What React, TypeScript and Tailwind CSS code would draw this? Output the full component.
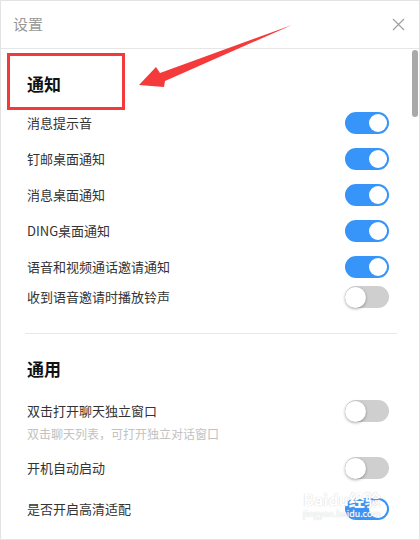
import React from "react";

type Item = { label: string; on: boolean; hint?: string };

const notify: Item[] = [
  { label: "消息提示音", on: true },
  { label: "钉邮桌面通知", on: true },
  { label: "消息桌面通知", on: true },
  { label: "DING桌面通知", on: true },
  { label: "语音和视频通话邀请通知", on: true },
  { label: "收到语音邀请时播放铃声", on: false },
];

const Toggle = ({ on }: { on: boolean }) =>
  on ? (
    <div className="w-[44px] h-[22px] rounded-full bg-[#3794f8] flex items-center justify-end pr-[2px]">
      <div className="w-[18px] h-[18px] rounded-full bg-white" />
    </div>
  ) : (
    <div className="w-[44px] h-[22px] rounded-full bg-[#cfcfcf] flex items-center">
      <div className="w-[21px] h-[21px] rounded-full bg-white shadow-[0_1px_3px_rgba(0,0,0,0.35)]" />
    </div>
  );

const Row = ({ item, className }: { item: Item; className?: string }) => (
  <div className={"h-[30px] flex items-center justify-between " + (className ?? "")}>
    <span className="text-[13px] text-[#333]">{item.label}</span>
    <Toggle on={item.on} />
  </div>
);

export default function App() {
  return (
    <div
      className="relative w-[420px] h-[540px] bg-white border border-[#e3e3e3] overflow-hidden"
      style={{ fontFamily: '"Noto Sans CJK SC", "Noto Sans", sans-serif' }}
    >
      {/* HEADER */}
      <div className="h-[48px] border-b border-[#e6e6e6] flex items-center justify-between pl-[12px] pr-[14px]">
        <span className="text-[15px] text-[#999]">设置</span>
        <svg width="13" height="13" viewBox="0 0 13 13">
          <path d="M1 1L12 12M12 1L1 12" stroke="#a0a0a0" strokeWidth="1.2" />
        </svg>
      </div>

      {/* BODY */}
      <div className="pl-[26px] pr-[30px] flex flex-col">
        <div className="pt-[23px] h-[47px] text-[17px] leading-[24px] font-bold text-[#111]">通知</div>
        <Row item={notify[0]} className="mt-[12px]" />
        <Row item={notify[1]} className="mt-[6px]" />
        <Row item={notify[2]} className="mt-[6px]" />
        <Row item={notify[3]} className="mt-[6px]" />
        <Row item={notify[4]} className="mt-[6px]" />
        <Row item={notify[5]} />

        <div className="mt-[21px] -ml-[2px] w-[372px] h-px bg-[#e8e8e8]" />

        <div className="mt-[23px] text-[17px] leading-[24px] font-bold text-[#111]">通用</div>
        <Row item={{ label: "双击打开聊天独立窗口", on: false }} className="mt-[15px]" />
        <div className="text-[12px] leading-[16px] text-[#c2c2c2]">双击聊天列表，可打开独立对话窗口</div>
        <Row item={{ label: "开机自动启动", on: false }} className="mt-[11px]" />
        <Row item={{ label: "是否开启高清适配", on: true }} className="mt-[11px]" />
      </div>

      {/* SCROLLBAR */}
      <div className="absolute right-[1px] top-[49px] w-[6px] h-[67px] rounded-full bg-[#a9a9a9]" />

      {/* ANNOTATION */}
      <div className="absolute left-[6px] top-[52px] w-[118px] h-[57px] border-[3px] border-[#f23a3a]" />
      <svg className="absolute left-0 top-0" width="420" height="120" viewBox="0 0 420 120">
        <polygon
          points="138,84 155,66 159,72 291,24 164,80 163,86"
          fill="#f43a3a"
        />
      </svg>

      {/* WATERMARK */}
      <div className="absolute left-[302px] top-[490px] flex flex-col items-start gap-[2px] pointer-events-none">
        <span className="text-[16px] leading-[16px] font-bold text-white [text-shadow:0_0_1px_#bbb]">Baidu经验</span>
        <span className="text-[9px] leading-[10px] text-white [text-shadow:0_0_1px_#bbb]">jingyan.baidu.com</span>
      </div>
    </div>
  );
}
